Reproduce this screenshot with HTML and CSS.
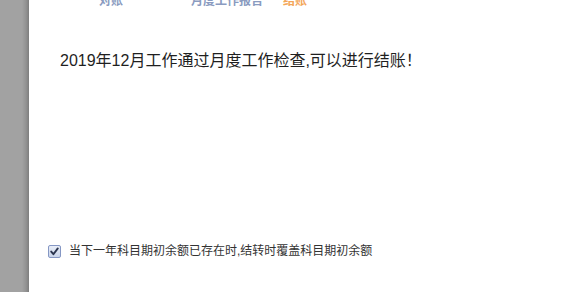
FILE: index.html
```html
<!DOCTYPE html>
<html lang="zh-CN">
<head>
<meta charset="utf-8">
<title>结账</title>
<link rel="stylesheet" href="styles.css">
</head>
<body>
<div class="page">
  <div class="side"></div>
  <div class="panel">
    <div class="tabs">
      <span class="tab tab-a">对账</span>
      <span class="tab tab-b">月度工作报告</span>
      <span class="tab tab-c active">结账</span>
    </div>
    <p class="message">2019年12月工作通过月度工作检查,可以进行结账！</p>
    <label class="option">
      <span class="check" role="checkbox" aria-checked="true">
        <svg viewBox="0 0 13 13" width="13" height="13" aria-hidden="true">
          <path d="M3.2 6.6 L5.4 9.2 L9.8 3.4" fill="none" stroke="#2b3550" stroke-width="1.9" stroke-linecap="round" stroke-linejoin="round"/>
        </svg>
      </span>
      <span class="option-text">当下一年科目期初余额已存在时,结转时覆盖科目期初余额</span>
    </label>
  </div>
</div>
</body>
</html>
```

FILE: styles.css
```css
html, body {
  margin: 0;
  padding: 0;
  background: #ffffff;
}

body {
  font-family: "Liberation Sans", "Noto Sans CJK SC", sans-serif;
  overflow: hidden;
}

.page {
  display: flex;
  width: 571px;
  height: 292px;
}

.side {
  width: 29px;
  flex: none;
  background: linear-gradient(to right, #a2a2a2 0, #a2a2a2 22px, #929292 26px, #7e7e7e 29px);
}

.panel {
  flex: 1;
  display: flex;
  flex-direction: column;
  background: #ffffff;
}

.tabs {
  display: flex;
  margin-top: -7px;
  height: 16px;
  font-size: 12px;
  line-height: 16px;
  font-weight: bold;
}

.tab {
  color: #8a9bc0;
}

.tab-a {
  margin-left: 70px;
}

.tab-b {
  margin-left: 68px;
}

.tab-c {
  margin-left: 20px;
}

.tab.active {
  color: #f3a659;
}

.message {
  margin: 41px 0 0 31px;
  font-size: 16px;
  line-height: 22px;
  color: #1f1f1f;
}

.option {
  display: flex;
  align-items: center;
  margin: 171px 0 0 19px;
  font-size: 12px;
  line-height: 16px;
  color: #333333;
}

.check {
  display: block;
  width: 13px;
  height: 13px;
  box-sizing: border-box;
  margin-right: 8px;
  border: 1px solid #8597c4;
  border-radius: 2px;
  background: linear-gradient(to bottom, #e9eef8, #c9d4ea);
  position: relative;
}

.check svg {
  position: absolute;
  left: -1px;
  top: -1px;
}

.option-text {
  white-space: nowrap;
}
```
